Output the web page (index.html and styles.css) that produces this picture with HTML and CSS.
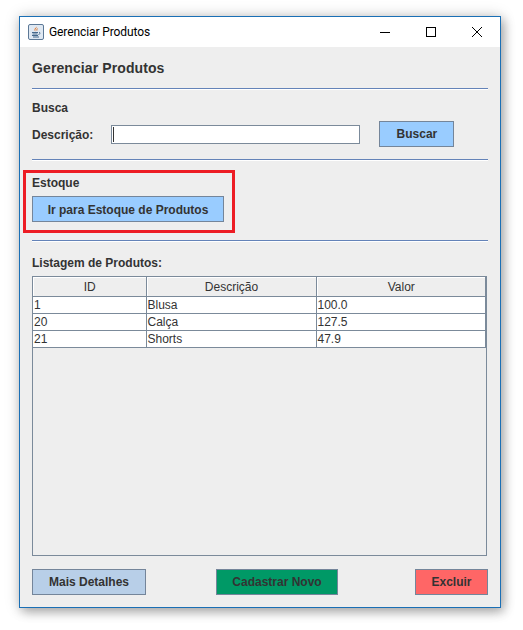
FILE: index.html
```html
<!DOCTYPE html>
<html lang="en">
<head>
    <meta charset="UTF-8">
    <meta name="viewport" content="width=device-width, initial-scale=1.0">
    <title>Gerenciar Produtos</title>
    <link rel="stylesheet" href="styles.css">
</head>
<body>

    <div class="window">
        <div class="titlebar">
            <svg class="app-icon" width="16" height="16" viewBox="0 0 16 16">
                <rect x="0.5" y="0.5" width="15" height="15" rx="1.5" fill="#dfe8f2" stroke="#5c7896"/>
                <path d="M8.5 2.5c1 1.5-1.8 2.5-1.2 4.2.2.6.7.8.7.8-1-.3-2-1.2-1.4-2.6.4-1 2-1.400 1.900-2.400z" fill="#e2762a"/>
                <path d="M9.800 4.500c-.9.600-1.300 1.200-.9 2.100" fill="none" stroke="#e2762a"/>
                <path d="M4 8.500h6M4.500 10h5M4 11.500h6M5 13h6" stroke="#44688c" fill="none"/>
                <path d="M11 8.500c1.500-.3 1.500 1.500-.5 2" stroke="#44688c" fill="none"/>
            </svg>
            <span class="title-text">Gerenciar Produtos</span>
            <div class="window-controls">
                <svg width="12" height="12" viewBox="0 0 12 12"><path d="M1 6.500h10" stroke="#000" fill="none"/></svg>
                <svg width="12" height="12" viewBox="0 0 12 12"><rect x="1.500" y="1.500" width="9" height="9" stroke="#000" fill="none"/></svg>
                <svg width="12" height="12" viewBox="0 0 12 12"><path d="M1 1l10 10M11 1L1 11" stroke="#000" fill="none"/></svg>
            </div>
        </div>

        <div class="content">
            <h2 class="page-title">Gerenciar Produtos</h2>
            <div class="separator"></div>

            <h3 class="section-label busca-label">Busca</h3>
            <form class="search-row">
                <label class="section-label search-label" for="descricao">Descrição:</label>
                <input class="search-input" id="descricao" type="text">
                <button class="btn btn-search" type="button">Buscar</button>
            </form>
            <div class="separator"></div>

            <h3 class="section-label estoque-label">Estoque</h3>
            <button class="btn btn-stock" type="button">Ir para Estoque de Produtos</button>
            <div class="separator stock-separator"></div>

            <h3 class="section-label list-label">Listagem de Produtos:</h3>
            <div class="table-box">
                <table class="product-table">
                    <thead>
                        <tr><th>ID</th><th>Descrição</th><th>Valor</th></tr>
                    </thead>
                    <tbody>
                        <tr><td>1</td><td>Blusa</td><td>100.0</td></tr>
                        <tr><td>20</td><td>Calça</td><td>127.5</td></tr>
                        <tr><td>21</td><td>Shorts</td><td>47.9</td></tr>
                    </tbody>
                </table>
            </div>

            <div class="actions">
                <button class="btn btn-details" type="button">Mais Detalhes</button>
                <button class="btn btn-new" type="button">Cadastrar Novo</button>
                <button class="btn btn-delete" type="button">Excluir</button>
            </div>
        </div>

        <div class="highlight"></div>
    </div>

</body>
</html>
```

FILE: styles.css
```css
* {
    box-sizing: border-box;
}

body {
    min-height: 100vh;
    margin: 0;
    padding: 16px 0 0 19px;
    background-color: #fff;
    font-family: "Liberation Sans", Arial, sans-serif;
    color: #333;
}

.window {
    position: relative;
    width: 482px;
    height: 592px;
    background-color: #eee;
    border: 1px solid #1a6fb5;
    box-shadow: 0 0 14px rgba(0, 0, 0, 0.18), 3px 4px 10px rgba(0, 0, 0, 0.28);
}

.titlebar {
    display: flex;
    align-items: center;
    height: 30px;
    padding-left: 8px;
    background-color: #fff;
}

.title-text {
    margin-left: 5px;
    font-family: Roboto, "Liberation Sans", sans-serif;
    font-size: 12px;
    letter-spacing: -0.1px;
    color: #000;
}

.window-controls {
    display: flex;
    gap: 34px;
    margin-left: auto;
    margin-right: 17px;
}

.window-controls svg {
    display: block;
}

.content {
    padding: 0 12px;
}

.page-title {
    height: 41px;
    margin: 0;
    padding-top: 1px;
    font-size: 14px;
    letter-spacing: 0.1px;
    line-height: 41px;
}

.separator {
    height: 2px;
    background-color: #fff;
    border-top: 1px solid #6483b8;
}

.section-label {
    margin: 0;
    font-size: 12px;
    font-weight: bold;
    line-height: 14px;
}

.busca-label {
    margin-top: 11px;
}

.search-row {
    display: flex;
    align-items: center;
    height: 26px;
    margin-top: 6px;
}

.search-label {
    padding-top: 2px;
}

.search-input {
    width: 249px;
    height: 19px;
    margin-left: 18px;
    margin-top: 1px;
    padding: 0;
    background: #fff linear-gradient(#333, #333) no-repeat 1px 1px / 1px 15px;
    border: 1px solid #7b8a9a;
}

.btn {
    height: 26px;
    padding: 0;
    font-family: "Liberation Sans", Arial, sans-serif;
    font-size: 12px;
    font-weight: bold;
    color: #333;
    border: 1px solid #74859a;
}

.btn-search {
    width: 75px;
    margin-left: 19px;
    background-color: #99ccff;
}

.search-row + .separator {
    margin-top: 12px;
}

.estoque-label {
    margin-top: 15px;
}

.btn-stock {
    display: block;
    width: 192px;
    margin-top: 6px;
    padding-top: 1px;
    background-color: #99ccff;
}

.stock-separator {
    margin-top: 18px;
}

.list-label {
    margin-top: 14px;
}

.table-box {
    height: 280px;
    margin-top: 6px;
    margin-right: 1px;
    background-color: #eee;
    border: 1px solid #7b8a9a;
}

.product-table {
    width: 453px;
    border-collapse: collapse;
    table-layout: fixed;
    font-size: 12px;
}

.product-table th,
.product-table td {
    padding: 1px 0 0 1px;
    border: 1px solid #7b8a9a;
    border-top: 0;
    border-left: 0;
    color: #333;
    font-weight: normal;
    line-height: 15px;
}

.product-table th {
    height: 19px;
    padding-top: 3px;
    text-align: center;
    background-color: #eee;
    box-shadow: inset 1px 1px 0 #fff;
}

.product-table th:nth-child(1),
.product-table td:nth-child(1) {
    width: 113px;
}

.product-table th:nth-child(2),
.product-table td:nth-child(2) {
    width: 170px;
}

.product-table td {
    height: 16px;
    background-color: #fff;
}

.actions {
    display: flex;
    justify-content: space-between;
    margin-top: 13px;
}

.btn-details {
    width: 114px;
    background-color: #b8cfe8;
}

.btn-new {
    width: 122px;
    margin-left: 70px;
    background-color: #009966;
}

.btn-delete {
    width: 73px;
    margin-left: 77px;
    background-color: #ff6666;
}

.highlight {
    position: absolute;
    left: 3px;
    top: 153px;
    width: 212px;
    height: 63px;
    border: 3px solid #ed1c24;
}
```
